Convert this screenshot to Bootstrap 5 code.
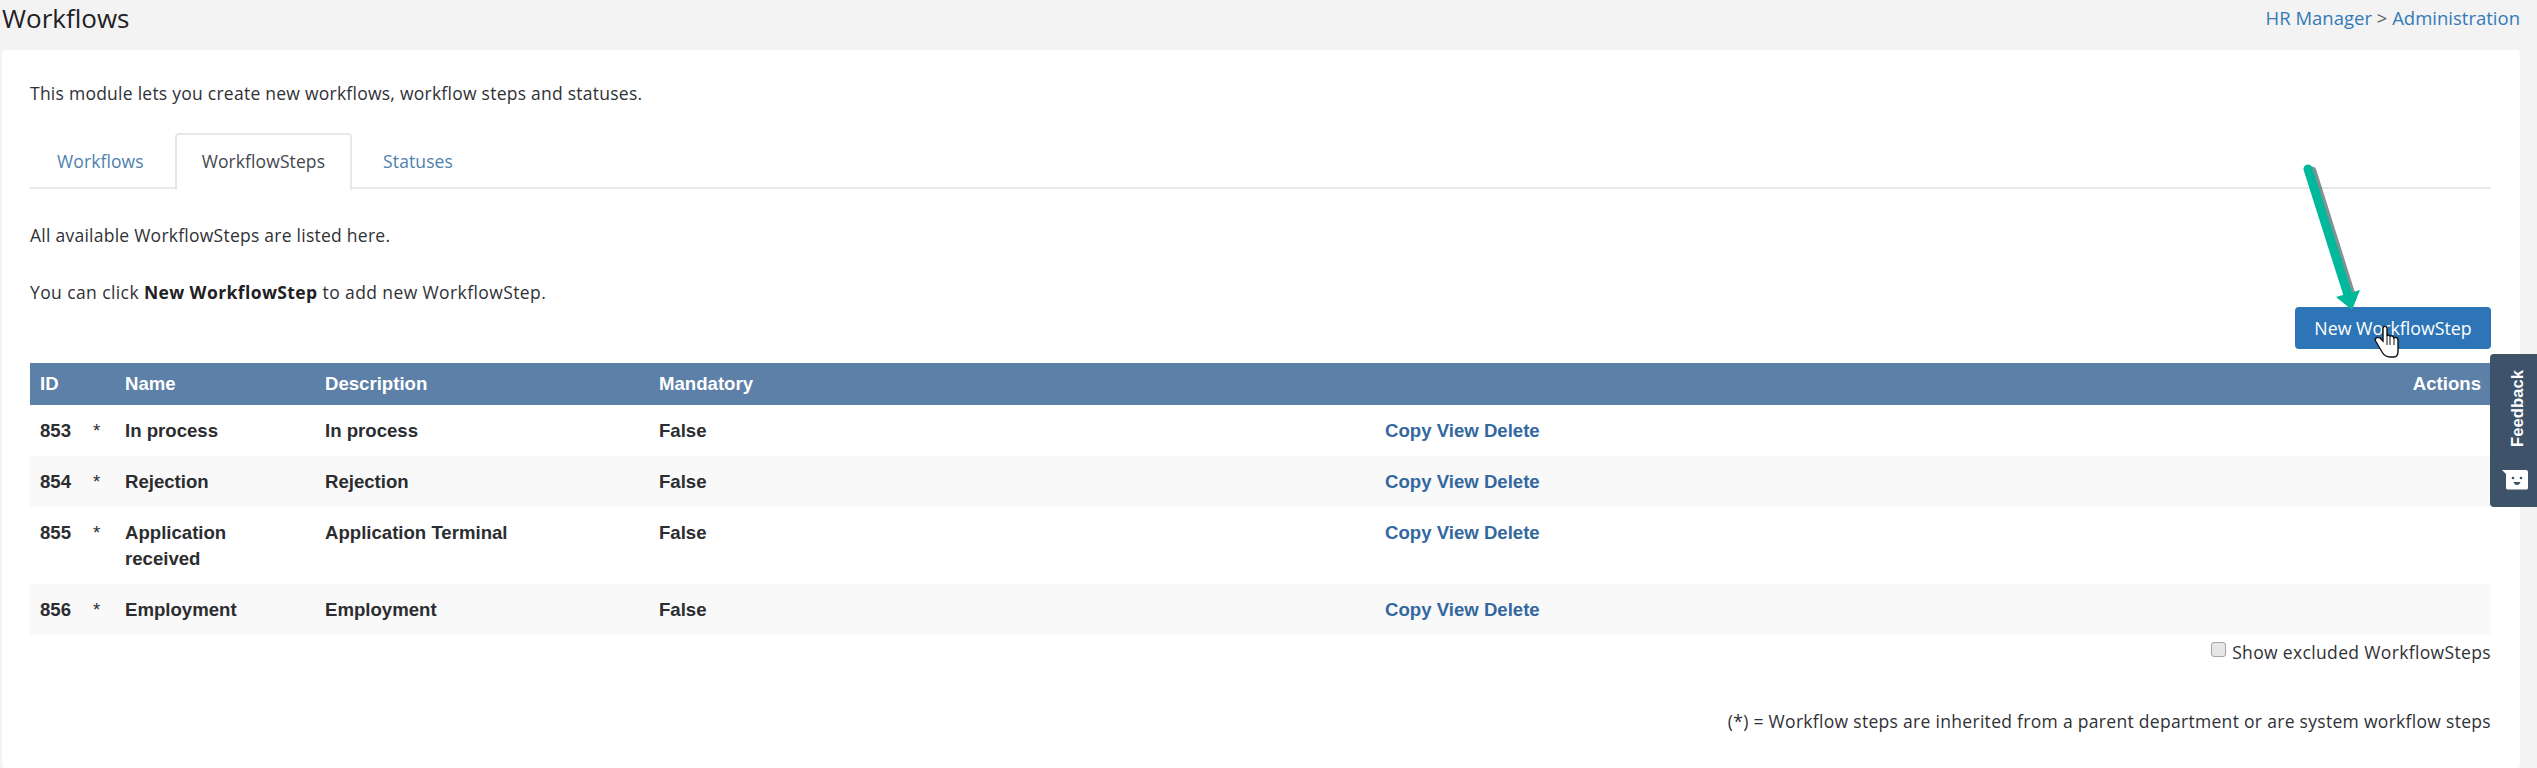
<!DOCTYPE html>
<html lang="en">
<head>
<meta charset="utf-8">
<title>Workflows</title>
<link href="https://cdn.jsdelivr.net/npm/bootstrap@5.3.0/dist/css/bootstrap.min.css" rel="stylesheet">
<style>
html,body{height:768px;overflow:hidden}
body{background:#f3f3f4;color:#2f3136;font-family:"Open Sans","Noto Sans",sans-serif;font-size:17.5px;letter-spacing:.25px;position:relative}
a{text-decoration:none;color:#337ab7}
.top-bar{height:50px;padding:0 17px 0 2px}
.page-title{font-size:26px;font-weight:400;color:#1f2125;margin:0;line-height:36px;letter-spacing:0}
.crumbs{font-size:18.5px;line-height:36px;letter-spacing:0}
.crumbs span{color:#555}
.panel-box{background:#fff;margin:0 17px 0 2px;height:718px;border-radius:4px;padding:32px 29px 0 28px}
.intro{line-height:22px;margin:0 0 29px}
.tabs-wrap.nav-tabs{border-bottom:2px solid #e8e8e8;height:56px;--bs-nav-tabs-border-width:0}
.tabs-wrap .nav-link{height:56px;padding:16px 27px 0;margin:0;color:#4f7fae;line-height:24px;border:0;letter-spacing:.1px}
.tabs-wrap .nav-item:first-child{margin-right:4px}
.tabs-wrap .nav-item:last-child{margin-left:4px}
.tabs-wrap .nav-link.active{color:#44474d;background:#fff;border:2px solid #e8e8e8;border-bottom:0;border-radius:4px 4px 0 0;padding:14px 25px 0;height:57px;margin-bottom:-1px}
.note{line-height:22px;margin:0}
.note-a{margin-top:35px}
.note-b{margin-top:35px;letter-spacing:.4px}
.note-b b{color:#1f2125}
.new-row{margin-top:4px;height:46px}
.new-btn{width:196px;height:42px;padding:0;font-size:17.8px;background:#2d75b6;border:0;border-radius:4px;color:#fff;letter-spacing:0}
.grid-table{table-layout:fixed;width:2461px;margin:10px 0 0;font-family:"Liberation Sans",Arial,sans-serif;font-weight:700;font-size:18.6px;line-height:26px;letter-spacing:0;color:#2b2d31;--bs-table-bg:transparent;--bs-table-border-color:transparent}
.grid-table th{background:#5d80a9;color:#fff;padding:8px 10px 8px;height:42px;border:0}
.grid-table td{padding:13px 10px 12px;border:0;vertical-align:top;background:#fff;box-shadow:none;color:#2b2d31}
.grid-table tbody tr:nth-child(even) td{background:#f9f9f9}
.grid-table a{color:#33689f}
.grid-table td.star{padding-left:10px;padding-right:0;font-weight:400}
.grid-table td.name-cell{padding-right:30px}
.show-row{height:30px;padding-top:5px;line-height:24px;letter-spacing:.35px}
.show-row input.form-check-input{width:15px;height:15px;margin:0 6px 0 0;float:none;vertical-align:2px;border-radius:3px;background-color:#e6e6e6;border-color:#a5a5a5}
.foot-note{margin-top:44px;line-height:24px;letter-spacing:.3px}
.feedback-tab{position:absolute;left:2490px;top:354px;width:47px;height:153px;background:#3e5269;border-radius:4px 0 0 4px;color:#fff}
.feedback-label{position:absolute;left:19px;top:16px;writing-mode:vertical-rl;transform:rotate(180deg);font-family:"Liberation Sans",Arial,sans-serif;font-weight:700;font-size:16.5px;line-height:1;letter-spacing:.1px}
.feedback-icon{position:absolute;left:12px;top:115px}
.pointer-art{position:absolute;left:2290px;top:160px;pointer-events:none}
</style>
</head>
<body>
<div class="top-bar d-flex justify-content-between align-items-start">
  <h1 class="page-title">Workflows</h1>
  <div class="crumbs"><a href="#">HR Manager</a> <span>&gt;</span> <a href="#">Administration</a></div>
</div>
<main class="panel-box">
  <p class="intro">This module lets you create new workflows, workflow steps and statuses.</p>
  <ul class="nav nav-tabs tabs-wrap">
    <li class="nav-item"><a class="nav-link" href="#">Workflows</a></li>
    <li class="nav-item"><a class="nav-link active" href="#">WorkflowSteps</a></li>
    <li class="nav-item"><a class="nav-link" href="#">Statuses</a></li>
  </ul>
  <p class="note note-a">All available WorkflowSteps are listed here.</p>
  <p class="note note-b">You can click <b>New WorkflowStep</b> to add new WorkflowStep.</p>
  <div class="new-row d-flex justify-content-end"><button class="btn new-btn" type="button">New WorkflowStep</button></div>
  <table class="table grid-table">
    <colgroup><col style="width:53px"><col style="width:32px"><col style="width:200px"><col style="width:334px"><col style="width:726px"><col></colgroup>
    <thead><tr><th>ID</th><th></th><th>Name</th><th>Description</th><th>Mandatory</th><th class="text-end">Actions</th></tr></thead>
    <tbody>
      <tr><td>853</td><td class="star">*</td><td class="name-cell">In process</td><td>In process</td><td>False</td><td><a href="#">Copy</a> <a href="#">View</a> <a href="#">Delete</a></td></tr>
      <tr><td>854</td><td class="star">*</td><td class="name-cell">Rejection</td><td>Rejection</td><td>False</td><td><a href="#">Copy</a> <a href="#">View</a> <a href="#">Delete</a></td></tr>
      <tr><td>855</td><td class="star">*</td><td class="name-cell">Application received</td><td>Application Terminal</td><td>False</td><td><a href="#">Copy</a> <a href="#">View</a> <a href="#">Delete</a></td></tr>
      <tr><td>856</td><td class="star">*</td><td class="name-cell">Employment</td><td>Employment</td><td>False</td><td><a href="#">Copy</a> <a href="#">View</a> <a href="#">Delete</a></td></tr>
    </tbody>
  </table>
  <div class="show-row text-end"><input class="form-check-input" type="checkbox" id="ex"><label for="ex">Show excluded WorkflowSteps</label></div>
  <div class="foot-note text-end">(*) = Workflow steps are inherited from a parent department or are system workflow steps</div>
</main>
<aside class="feedback-tab">
  <span class="feedback-label">Feedback</span>
  <svg class="feedback-icon" width="26" height="21" viewBox="0 0 26 21"><path d="M0 1 L24 1 Q26 1 26 3 L26 19 Q26 20.5 24 20.5 L6 20.5 Q4 20.5 4 19 L4 5 Z" fill="#fff"/><circle cx="11" cy="9" r="1.3" fill="#3e5269"/><circle cx="19" cy="9" r="1.3" fill="#3e5269"/><path d="M11.5 13 H18.5 Q17.5 16 15 16 Q12.5 16 11.5 13Z" fill="#3e5269"/></svg>
</aside>
<svg class="pointer-art" width="120" height="200" viewBox="0 0 120 200">
  <path d="M20 10 L60 137" stroke="#1a3a35" stroke-opacity=".55" stroke-width="9" stroke-linecap="round" fill="none" transform="translate(2 1)"/>
  <path d="M18 9 L58 135" stroke="#00b89c" stroke-width="9" stroke-linecap="round" fill="none"/>
  <path d="M46 137 L70 130 L62 150 Z" fill="#00b89c"/>
  <path d="M93 168 V181 L90 178 Q86 176 85 180 L92 192 Q95 197 100 197 H104 Q108 197 108 191 V180 Q107 176 104 178 Q103 175 100 176 Q98 174 97 176 V168 Q95 164 93 168Z" fill="#fff" stroke="#111" stroke-width="1.4"/>
  <path d="M97 176V185M100 176V185M104 178V185" stroke="#111" stroke-width="1"/>
</svg>
<script src="https://cdn.jsdelivr.net/npm/bootstrap@5.3.0/dist/js/bootstrap.bundle.min.js"></script>
</body>
</html>
